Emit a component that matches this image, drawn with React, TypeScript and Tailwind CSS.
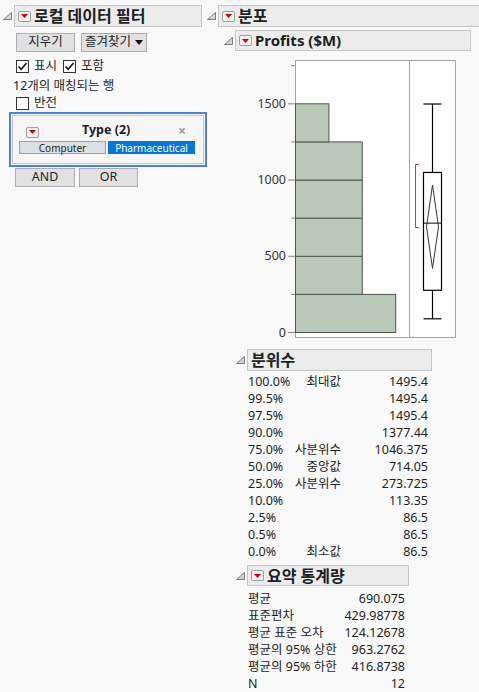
import React from 'react';

const quantiles: [string, string, string][] = [
  ['100.0%', '최대값', '1495.4'],
  ['99.5%', '', '1495.4'],
  ['97.5%', '', '1495.4'],
  ['90.0%', '', '1377.44'],
  ['75.0%', '사분위수', '1046.375'],
  ['50.0%', '중앙값', '714.05'],
  ['25.0%', '사분위수', '273.725'],
  ['10.0%', '', '113.35'],
  ['2.5%', '', '86.5'],
  ['0.5%', '', '86.5'],
  ['0.0%', '최소값', '86.5'],
];

const stats: [string, string][] = [
  ['평균', '690.075'],
  ['표준편차', '429.98778'],
  ['평균 표준 오차', '124.12678'],
  ['평균의 95% 상한', '963.2762'],
  ['평균의 95% 하한', '416.8738'],
  ['N', '12'],
];

// histogram bins of 250, counts
const bins = [3, 2, 2, 2, 2, 1];

const Tri = () => (
  <svg width="9" height="8" className="block">
    <polygon points="8.5,0.5 8.5,7.5 0.5,7.5" fill="#d6d6d6" stroke="#7a7a7a" />
  </svg>
);

const RedBtn = () => (
  <span className="inline-flex w-[13px] h-[11px] shrink-0 items-center justify-center rounded-[2px] border border-[#9c9c9c] bg-[#f3f3f3]">
    <svg width="7" height="4" className="block">
      <polygon points="0,0 7,0 3.5,4" fill="#d40000" />
    </svg>
  </span>
);

const Check = ({ checked }: { checked: boolean }) => (
  <span className="inline-flex w-[13px] h-[13px] shrink-0 items-center justify-center border border-[#333] bg-white">
    {checked && (
      <svg width="11" height="11" viewBox="0 0 11 11" className="block">
        <path d="M1.5 5.5 L4.2 8.3 L9.5 2" fill="none" stroke="#111" strokeWidth="1.6" />
      </svg>
    )}
  </span>
);

const Btn = ({ label, w, children }: { label: string; w: string; children?: React.ReactNode }) => (
  <div className={`${w} h-[19px] flex items-center justify-center gap-[4px] border border-[#adadad] bg-[#e1e1e1] text-[12.5px] leading-none`}>
    {label}
    {children}
  </div>
);

const y = (v: number) => 277 - v * 0.152467;

const Chart = () => {
  const ticks = [0, 500, 1000, 1500];
  const minor = [250, 750, 1250, 1750];
  return (
    <svg width="249" height="292" className="block">
      <rect x="65.5" y="5.5" width="160" height="277" fill="#fff" stroke="#a3a3a3" />
      <line x1="179.5" y1="5.5" x2="179.5" y2="282.5" stroke="#a3a3a3" />
      {ticks.map((t) => (
        <g key={t}>
          <line x1="58" y1={y(t) + 0.5} x2="65" y2={y(t) + 0.5} stroke="#888" />
          <text x="56" y={y(t) + 4.5} textAnchor="end" fontSize="12.5" fill="#333">
            {t}
          </text>
        </g>
      ))}
      {minor.map((t) => (
        <line key={t} x1="61" y1={y(t) + 0.5} x2="65" y2={y(t) + 0.5} stroke="#888" />
      ))}
      {bins.map((c, i) => (
        <rect
          key={i}
          x="65.5"
          y={y((i + 1) * 250) + 0.5}
          width={c * 33.4}
          height={250 * 0.152467}
          fill="#b9c9b9"
          stroke="#4b564b"
        />
      ))}
      {/* shortest half bracket */}
      <path d="M189 109.5 H185.5 V172.5 H189" fill="none" stroke="#e0284a" />
      {/* box plot */}
      <line x1="202.5" y1={y(1495.4)} x2="202.5" y2={y(86.5)} stroke="#000" strokeWidth="1.2" />
      <line x1="193.5" y1={y(1495.4)} x2="211.5" y2={y(1495.4)} stroke="#000" strokeWidth="1.2" />
      <line x1="193.5" y1={y(86.5)} x2="211.5" y2={y(86.5)} stroke="#000" strokeWidth="1.2" />
      <rect x="193.5" y={y(1046.375)} width="18" height={y(273.725) - y(1046.375)} fill="#fff" stroke="#000" strokeWidth="1.2" />
      <line x1="193.5" y1={y(714.05)} x2="211.5" y2={y(714.05)} stroke="#000" strokeWidth="1" />
      <polygon
        points={`202.5,${y(963.2762)} 208.5,${y(690.075)} 202.5,${y(416.8738)} 196.5,${y(690.075)}`}
        fill="none"
        stroke="#333"
        strokeWidth="1"
      />
    </svg>
  );
};

export default function App() {
  return (
    <div className="w-[479px] min-h-[692px] bg-[#f9f9f9] flex text-[12.5px] text-[#1e1e1e] font-['Noto_Sans','Noto_Sans_CJK_KR',sans-serif]">
      {/* left: local data filter */}
      <div className="w-[206px] shrink-0 pt-[5px]">
        <div className="flex items-center h-[22px]">
          <div className="w-[14px] pl-[3px]">
            <Tri />
          </div>
          <div className="flex items-center h-[22px] w-[188px] border border-[#c6c6c6] bg-[#ececec] pl-[3px] gap-[3px]">
            <RedBtn />
            <span className="font-bold text-[16px] leading-none">로컬 데이터 필터</span>
          </div>
        </div>
        <div className="flex mt-[6px] ml-[16px] gap-[6px]">
          <Btn label="지우기" w="w-[59px]" />
          <Btn label="즐겨찾기" w="w-[66px]">
            <svg width="8" height="5" className="block">
              <polygon points="0,0 8,0 4,5" fill="#111" />
            </svg>
          </Btn>
        </div>
        <div className="flex items-center h-[13px] mt-[8px] ml-[16px]">
          <Check checked />
          <span className="ml-[5px] mr-[6px] leading-none">표시</span>
          <Check checked />
          <span className="ml-[5px] leading-none">포함</span>
        </div>
        <div className="h-[17px] mt-[5px] ml-[13px] flex items-center leading-none">12개의 매칭되는 행</div>
        <div className="flex items-center h-[13px] mt-[2px] ml-[16px]">
          <Check checked={false} />
          <span className="ml-[5px] leading-none">반전</span>
        </div>
        <div className="mt-[2px] ml-[9px] w-[198px] h-[55px] border-2 border-[#4a80ea] p-px">
          <div className="h-full border border-[#c8c8c8] bg-[#f6f6f6] px-[6px]">
            <div className="flex items-center h-[17px] mt-[6px] relative">
              <div className="pl-[7px]">
                <RedBtn />
              </div>
              <span className="absolute left-[63px] font-bold text-[12.5px] leading-none">Type (2)</span>
              <span className="ml-auto mr-[11px] text-[#999] text-[14px] font-bold leading-none">×</span>
            </div>
            <div className="flex mt-[2px] gap-[2px] pr-[1px]">
              <div className="w-[87px] h-[13px] border border-[#9aa3ab] bg-[#dbe0e5] text-[10px] leading-none flex items-center justify-center">
                Computer
              </div>
              <div className="w-[87px] h-[13px] bg-[#0078d7] text-white text-[10px] leading-none flex items-center justify-center">
                Pharmaceutical
              </div>
            </div>
          </div>
        </div>
        <div className="flex mt-[1px] ml-[15px] gap-[4px]">
          <Btn label="AND" w="w-[60px]" />
          <Btn label="OR" w="w-[59px]" />
        </div>
      </div>

      {/* right: distribution */}
      <div className="flex-1 pt-[5px]">
        <div className="flex items-center h-[22px] pl-[1px] gap-[2px]">
          <Tri />
          <div className="flex items-center flex-1 h-[22px] border border-r-0 border-[#c6c6c6] bg-[#ececec] pl-[3px] gap-[3px]">
            <RedBtn />
            <span className="font-bold text-[16px] leading-none">분포</span>
          </div>
        </div>
        <div className="flex items-center h-[21px] mt-[3px] pl-[18px] gap-[2px]">
          <Tri />
          <div className="flex items-center w-[236px] h-[21px] border border-[#c6c6c6] bg-[#ececec] pl-[3px] gap-[3px]">
            <RedBtn />
            <span className="font-bold text-[15px] leading-none">Profits ($M)</span>
          </div>
        </div>
        <div className="mt-[4px] ml-[24px]">
          <Chart />
        </div>

        <div className="flex items-center h-[22px] mt-[2px] pl-[30px] gap-[2px]">
          <Tri />
          <div className="flex items-center w-[185px] h-[22px] border border-[#c6c6c6] bg-[#ececec] pl-[3px]">
            <span className="font-bold text-[16px] leading-none">분위수</span>
          </div>
        </div>
        <div className="mt-[3px] ml-[42px] w-[180px]">
          {quantiles.map(([p, l, v], i) => (
            <div key={i} className="grid grid-cols-[46px_47px_87px] h-[17px] items-center leading-none">
              <span>{p}</span>
              <span className="text-right">{l}</span>
              <span className="text-right">{v}</span>
            </div>
          ))}
        </div>

        <div className="flex items-center h-[21px] mt-[4px] pl-[30px] gap-[2px]">
          <Tri />
          <div className="flex items-center w-[162px] h-[21px] border border-[#c6c6c6] bg-[#ececec] pl-[3px] gap-[3px]">
            <RedBtn />
            <span className="font-bold text-[16px] leading-none">요약 통계량</span>
          </div>
        </div>
        <div className="mt-[5px] ml-[42px] w-[157px]">
          {stats.map(([l, v]) => (
            <div key={l} className="flex justify-between h-[17px] items-center leading-none">
              <span>{l}</span>
              <span>{v}</span>
            </div>
          ))}
        </div>
      </div>
    </div>
  );
}
